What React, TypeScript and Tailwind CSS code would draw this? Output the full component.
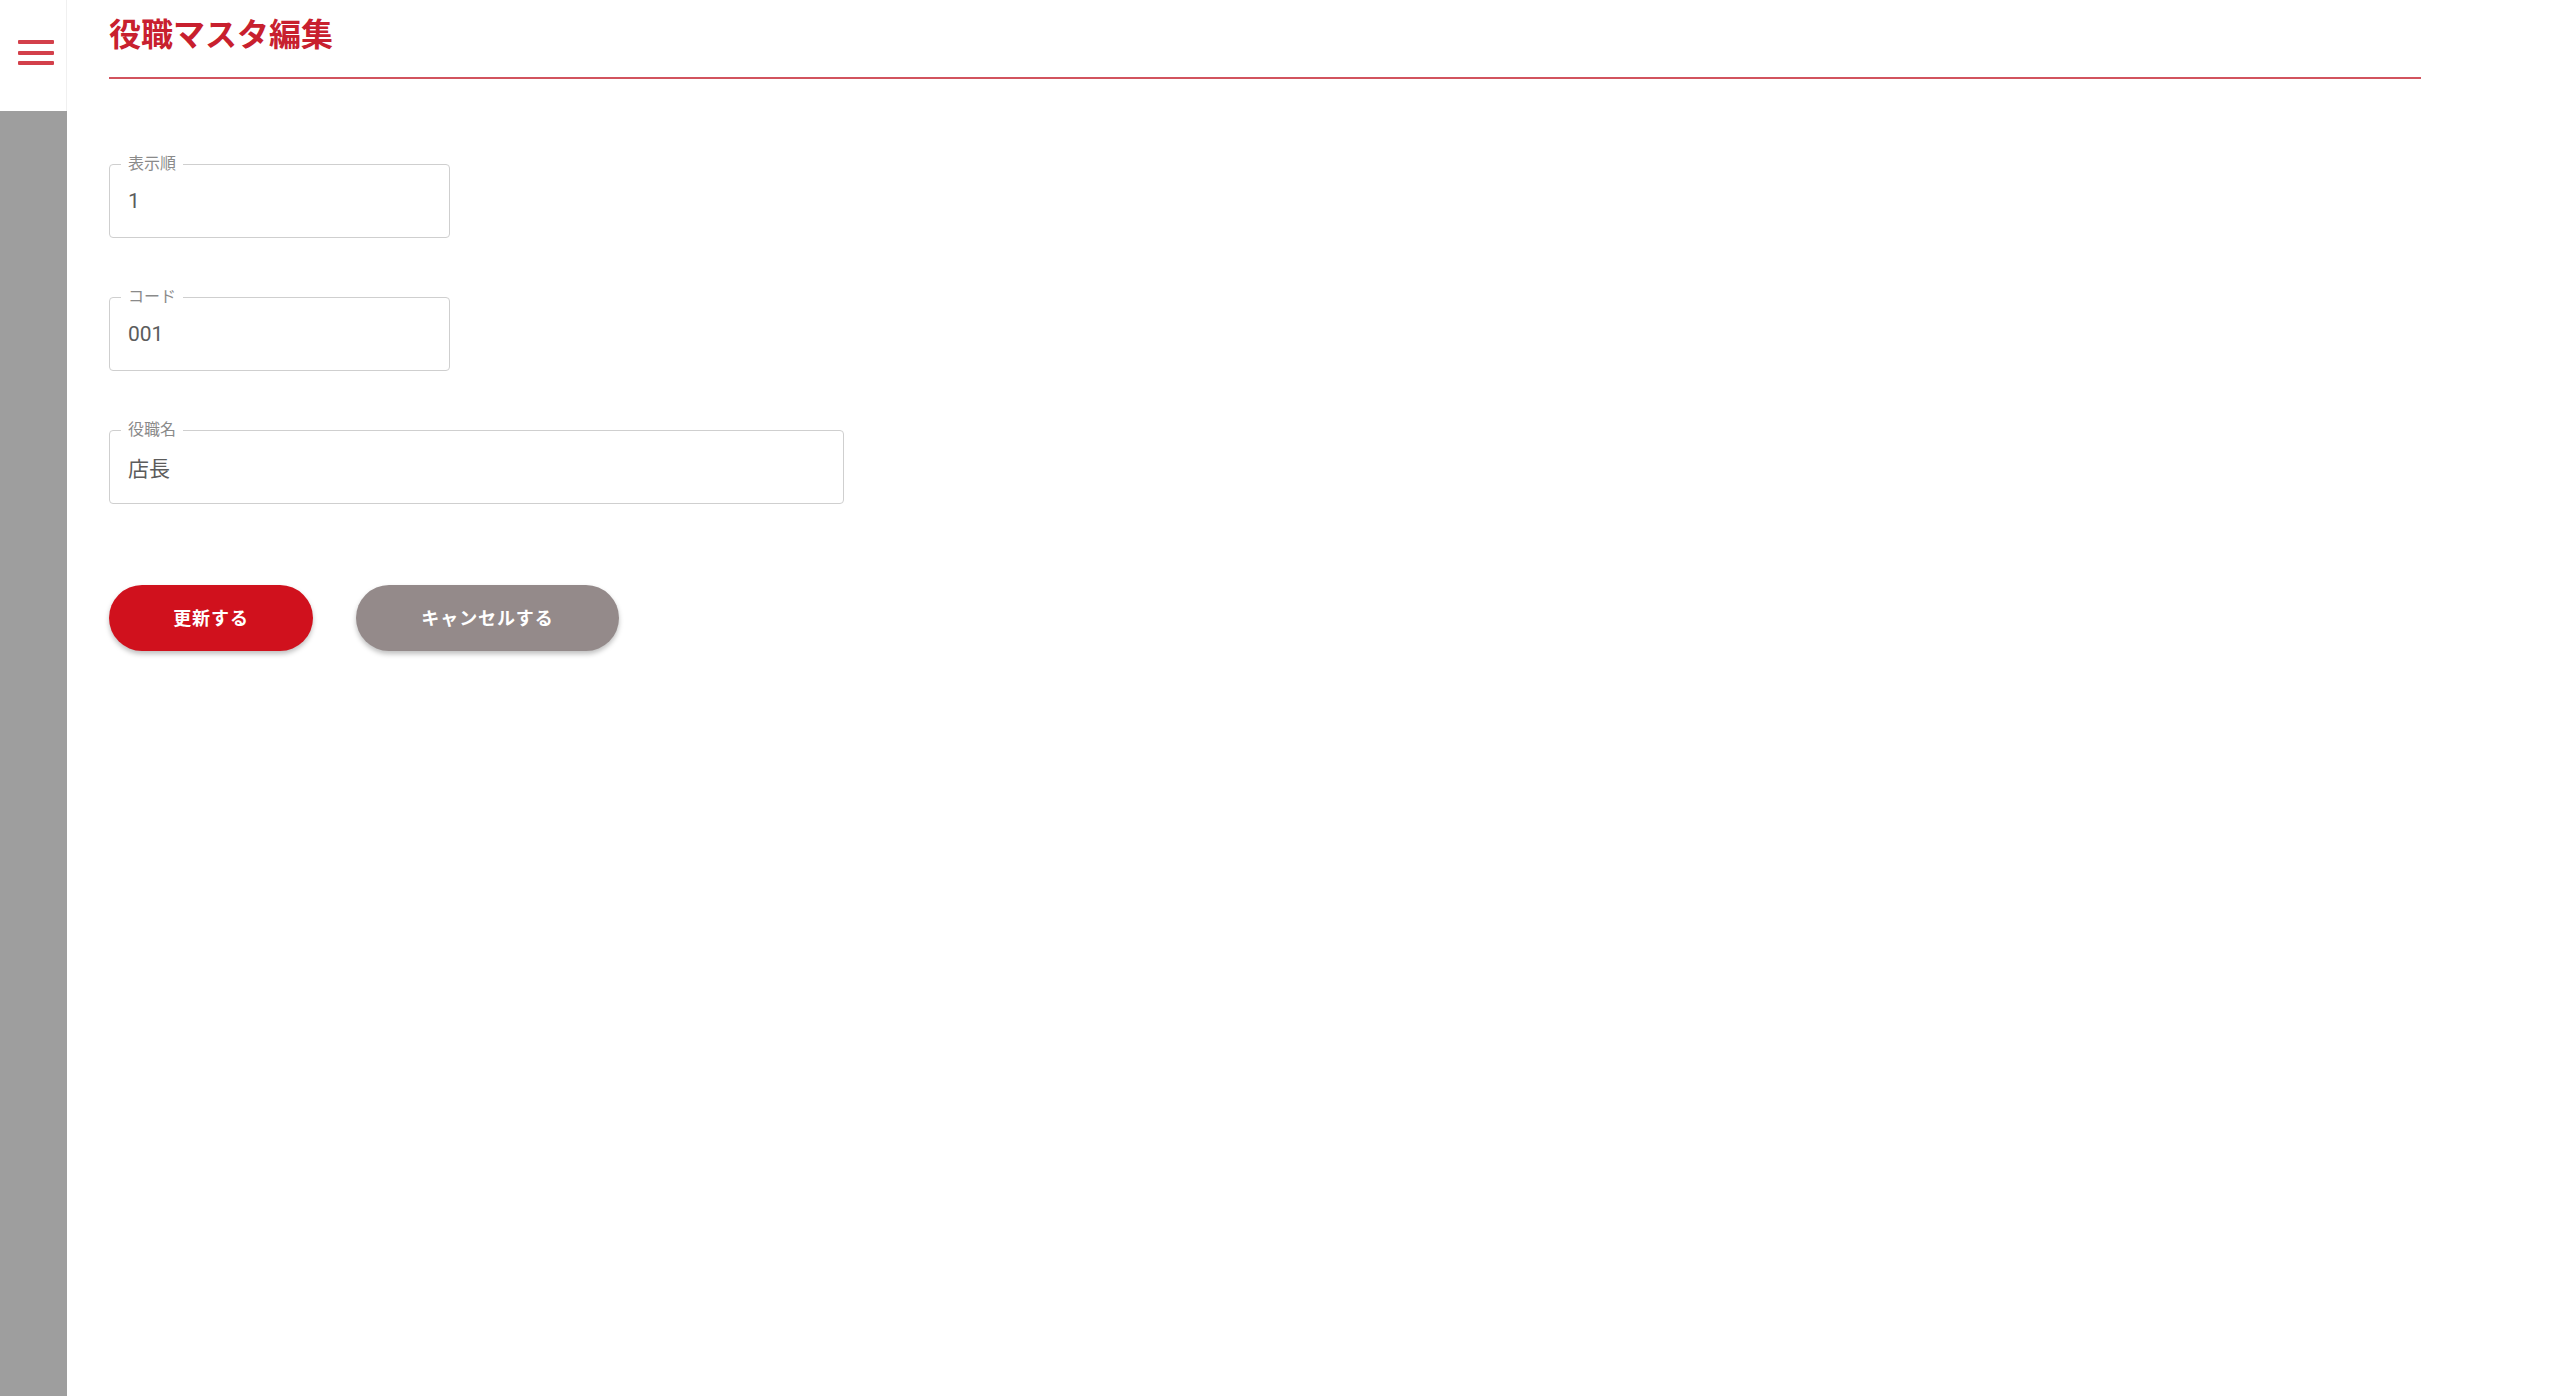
import { useState } from "react";

const font = "font-['Roboto','Noto_Sans_CJK_JP',sans-serif]";

interface FieldProps {
  label: string;
  value: string;
  width: string;
}

function OutlinedField({ label, value, width }: FieldProps) {
  const [val, setVal] = useState(value);
  return (
    <div className={`relative h-[74px] ${width} rounded-[4px] border border-[#cfcfcf]`}>
      <span className="absolute -top-[11px] left-[11px] bg-white px-[7px] text-[16px] leading-[20px] text-[#8a8a8a]">
        {label}
      </span>
      <input
        type="text"
        value={val}
        onChange={(e) => setVal(e.target.value)}
        className="h-full w-full bg-transparent px-[18px] text-[21px] text-[#5c5c5c] outline-none"
      />
    </div>
  );
}

export default function App() {
  return (
    <div className={`flex h-[1396px] w-full bg-white ${font}`}>
      {/* Sidebar */}
      <div className="flex w-[67px] shrink-0 flex-col">
        <div className="h-[111px] border-r border-[#f0f0f0] pl-[18px] pt-[40px]">
          <button aria-label="menu" className="flex h-[25px] w-[36px] flex-col justify-between">
            <span className="block h-[4px] w-full rounded-[1px] bg-[#d3404b]" />
            <span className="block h-[4px] w-full rounded-[1px] bg-[#d3404b]" />
            <span className="block h-[4px] w-full rounded-[1px] bg-[#d3404b]" />
          </button>
        </div>
        <div className="flex-1 bg-[#9e9e9e]" />
      </div>

      {/* Main */}
      <div className="flex-1 pl-[42px] pr-[139px]">
        <div className="h-[77px] pt-[19px]">
          <h1 className="text-[32px] font-bold leading-none text-[#c8202e]">役職マスタ編集</h1>
        </div>
        <div className="h-[2px] bg-[#d2535e]" />

        <div className="mt-[85px] flex flex-col gap-[59px]">
          <OutlinedField label="表示順" value="1" width="w-[341px]" />
          <OutlinedField label="コード" value="001" width="w-[341px]" />
          <OutlinedField label="役職名" value="店長" width="w-[735px]" />
        </div>

        <div className="mt-[81px] flex gap-[43px]">
          <button className="h-[66px] w-[204px] rounded-full bg-[#d0111d] text-[18px] font-bold tracking-[0.05em] text-white shadow-[0_3px_5px_rgba(0,0,0,0.25)]">
            更新する
          </button>
          <button className="h-[66px] w-[263px] rounded-full bg-[#948a8a] text-[18px] font-bold tracking-[0.05em] text-white shadow-[0_3px_5px_rgba(0,0,0,0.25)]">
            キャンセルする
          </button>
        </div>
      </div>
    </div>
  );
}
